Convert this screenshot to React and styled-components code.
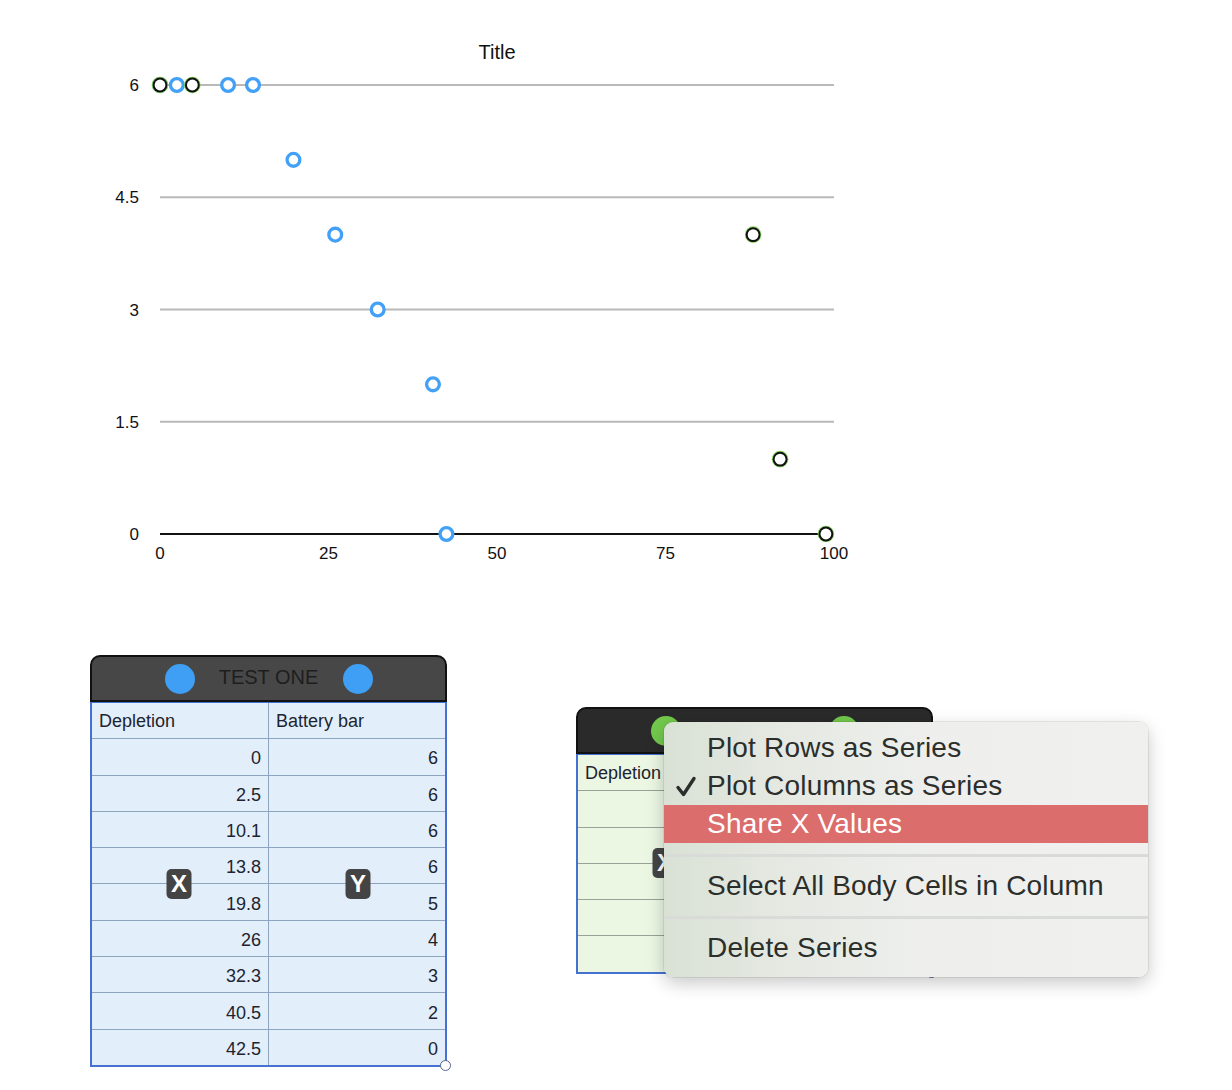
import React from 'react';
import styled, { createGlobalStyle } from 'styled-components';

const GlobalStyle = createGlobalStyle`
  html, body {
    margin: 0;
    padding: 0;
    background: #fff;
  }
  body {
    font-family: "Liberation Sans", Arial, sans-serif;
    color: #1c1c1c;
  }
`;

const Page = styled.div`
  position: relative;
  width: 1232px;
  height: 1090px;
  overflow: hidden;
`;

const ChartSvg = styled.svg`
  display: block;
  font-family: "Liberation Sans", Arial, sans-serif;
`;

const TablesRow = styled.div`
  display: flex;
  align-items: flex-start;
  gap: 129px;
  padding-left: 90px;
  margin-top: 55px;
`;

const Frame = styled.div`
  position: relative;
  width: 357px;
  margin-top: ${(p) => p.$offset || 0}px;
`;

const Header = styled.div`
  box-sizing: border-box;
  height: 47px;
  border: 2px solid #111;
  border-radius: 10px 10px 0 0;
  background: ${(p) => p.$bg};
  display: flex;
  align-items: center;
  justify-content: center;
  gap: 22px;
`;

const Dot = styled.span`
  width: 30px;
  height: 30px;
  border-radius: 50%;
  background: ${(p) => p.$color};
`;

const HeaderTitle = styled.span`
  font-size: 20px;
  color: #1e1e1e;
  width: 104px;
  text-align: center;
  white-space: nowrap;
  margin-top: -2px;
`;

const Body = styled.div`
  position: relative;
  display: grid;
  grid-template-columns: 176px 176px;
  grid-auto-rows: 35.3px;
  gap: 1px;
  background: ${(p) => p.$line};
  border: 2px solid #4571d1;
  border-top-width: 1px;
`;

const Cell = styled.div`
  background: ${(p) => p.$bg};
  font-size: 18px;
  color: #1d2430;
  display: flex;
  align-items: center;
  justify-content: ${(p) => (p.$head ? 'flex-start' : 'flex-end')};
  padding: ${(p) => (p.$head ? '1px 0 0 7px' : '4px 7px 0 0')};
  white-space: nowrap;
`;

const Badge = styled.span`
  position: absolute;
  top: 50%;
  left: ${(p) => p.$left}px;
  transform: translate(-50%, -50%);
  width: 25px;
  height: 30px;
  border-radius: 5px;
  background: #444;
  color: #fff;
  font-weight: bold;
  font-size: 24px;
  display: flex;
  align-items: center;
  justify-content: center;
`;

const Handle = styled.span`
  position: absolute;
  right: -6px;
  bottom: -6px;
  width: 9px;
  height: 9px;
  border-radius: 50%;
  background: #fff;
  border: 1.5px solid #55648a;
`;

const Menu = styled.div`
  position: absolute;
  left: 664px;
  top: 722px;
  width: 484px;
  box-sizing: border-box;
  padding: 7px 0 10px;
  border-radius: 9px;
  background: linear-gradient(90deg, #d9e1d5 0%, #e5e9e2 25%, #eeefed 55%, #f0f0ef 100%);
  box-shadow: 0 6px 18px rgba(0, 0, 0, 0.22), 0 0 0 1px rgba(0, 0, 0, 0.07);
`;

const MenuItem = styled.div`
  position: relative;
  height: 38px;
  display: flex;
  align-items: center;
  padding-left: 43px;
  font-size: 28px;
  letter-spacing: 0.2px;
  color: ${(p) => (p.$active ? '#fff' : '#2b2e2b')};
  background: ${(p) => (p.$active ? '#db6d6d' : 'transparent')};
  white-space: nowrap;
`;

const Check = styled.svg`
  position: absolute;
  left: 11px;
  top: 9px;
`;

const Separator = styled.div`
  height: 24px;
  display: flex;
  align-items: center;
  &::before {
    content: '';
    flex: 1;
    height: 3px;
    background: #d9dbd8;
  }
`;

const X0 = 160;
const X1 = 834;
const Y0 = 534;
const Y6 = 85;
const px = (v) => X0 + ((X1 - X0) * v) / 100;
const py = (v) => Y0 - ((Y0 - Y6) * v) / 6;

const blueSeries = [
  [0, 6], [2.5, 6], [10.1, 6], [13.8, 6], [19.8, 5],
  [26, 4], [32.3, 3], [40.5, 2], [42.5, 0],
];
const greenSeries = [[0, 6], [4.8, 6], [88, 4], [92, 1], [98.8, 0]];

function Chart() {
  const yTicks = [0, 1.5, 3, 4.5, 6];
  const xTicks = [0, 25, 50, 75, 100];
  return (
    <ChartSvg width="900" height="600" viewBox="0 0 900 600">
      <text x="497" y="59" fontSize="20" textAnchor="middle" fill="#111">Title</text>
      {yTicks.map((t) => (
        <g key={t}>
          {t !== 0 && (
            <line x1={X0} x2={X1} y1={py(t)} y2={py(t)} stroke="#b9b9b9" strokeWidth="2" />
          )}
          <text x="139" y={py(t) + 6} fontSize="17" textAnchor="end" fill="#111">{t}</text>
        </g>
      ))}
      <line x1={X0} x2={X1} y1={Y0} y2={Y0} stroke="#111" strokeWidth="2" />
      {xTicks.map((t) => (
        <text key={t} x={px(t)} y="559" fontSize="17" textAnchor="middle" fill="#111">{t}</text>
      ))}
      {blueSeries.map(([x, y], i) => (
        <circle key={'b' + i} cx={px(x)} cy={py(y)} r="6.4" fill="#fff" stroke="#42a1f6" strokeWidth="3.3" />
      ))}
      {greenSeries.map(([x, y], i) => (
        <g key={'g' + i}>
          <circle cx={px(x)} cy={py(y)} r="8.3" fill="#86d35a" />
          <circle cx={px(x)} cy={py(y)} r="7.4" fill="#111" />
          <circle cx={px(x)} cy={py(y)} r="5.4" fill="#fff" />
        </g>
      ))}
    </ChartSvg>
  );
}

function DataTable({ title, offset, headerBg, dotColor, cellBg, lineColor, rows }) {
  return (
    <Frame $offset={offset}>
      <Header $bg={headerBg}>
        <Dot $color={dotColor} />
        <HeaderTitle>{title}</HeaderTitle>
        <Dot $color={dotColor} />
      </Header>
      <Body $line={lineColor}>
        <Cell $head $bg={cellBg}>Depletion</Cell>
        <Cell $head $bg={cellBg}>Battery bar</Cell>
        {rows.map(([a, b], i) => (
          <React.Fragment key={i}>
            <Cell $bg={cellBg}>{a}</Cell>
            <Cell $bg={cellBg}>{b}</Cell>
          </React.Fragment>
        ))}
        <Badge $left={87}>X</Badge>
        <Badge $left={266}>Y</Badge>
        <Handle />
      </Body>
    </Frame>
  );
}

const rowsOne = [
  [0, 6], [2.5, 6], [10.1, 6], [13.8, 6], [19.8, 5],
  [26, 4], [32.3, 3], [40.5, 2], [42.5, 0],
];
const rowsTwo = [[0, 6], [5, 6], [88, 4], [92, 1], [100, 0]];

export default function App() {
  return (
    <Page>
      <GlobalStyle />
      <Chart />
      <TablesRow>
        <DataTable
          title="TEST ONE"
          headerBg="#474747"
          dotColor="#3f9ff4"
          cellBg="#e2effb"
          lineColor="#8ea5c2"
          rows={rowsOne}
        />
        <DataTable
          title="TEST TWO"
          offset={52}
          headerBg="#2a2a2a"
          dotColor="#72c84c"
          cellBg="#ebf6e3"
          lineColor="#9aa298"
          rows={rowsTwo}
        />
      </TablesRow>
      <Menu>
        <MenuItem>Plot Rows as Series</MenuItem>
        <MenuItem>
          <Check width="22" height="22" viewBox="0 0 22 22">
            <path d="M3 11.5 L8.5 18.5 L19 2.5" fill="none" stroke="#2b2e2b" strokeWidth="3.4" strokeLinecap="round" strokeLinejoin="round" />
          </Check>
          Plot Columns as Series
        </MenuItem>
        <MenuItem $active>Share X Values</MenuItem>
        <Separator />
        <MenuItem>Select All Body Cells in Column</MenuItem>
        <Separator />
        <MenuItem>Delete Series</MenuItem>
      </Menu>
    </Page>
  );
}
